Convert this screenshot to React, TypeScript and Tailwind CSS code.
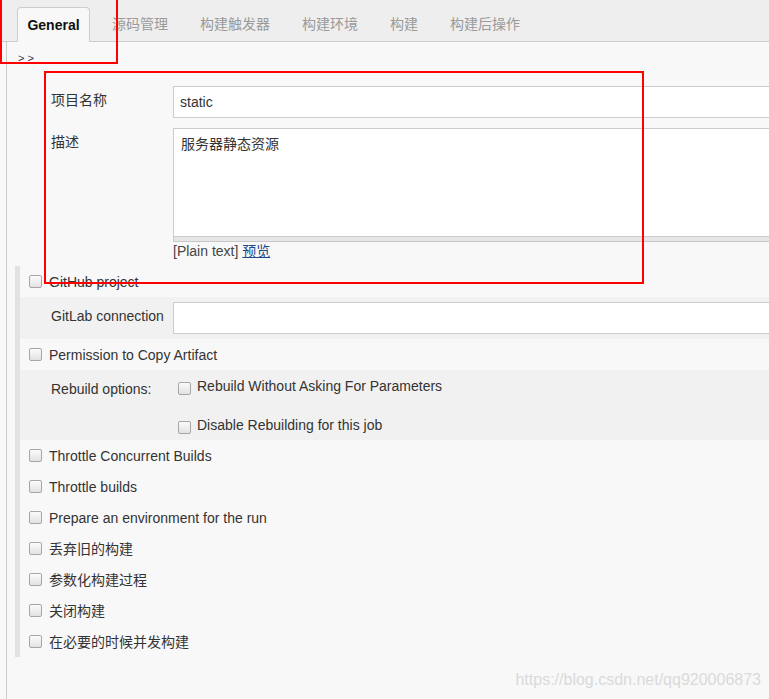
import React from "react";

const tabs = ["源码管理", "构建触发器", "构建环境", "构建", "构建后操作"];

const options = [
  "Throttle Concurrent Builds",
  "Throttle builds",
  "Prepare an environment for the run",
  "丢弃旧的构建",
  "参数化构建过程",
  "关闭构建",
  "在必要的时候并发构建",
];

const Box = () => (
  <span className="block w-[13px] h-[13px] shrink-0 rounded-[2px] border border-[#a6a6a6] bg-gradient-to-b from-[#fbfbfb] to-[#e2e2e2]" />
);

const CheckRow = ({ text }: { text: string }) => (
  <div className="flex h-[31px] items-center gap-[7px] pl-[9px]">
    <Box />
    <span className="leading-[16px]">{text}</span>
  </div>
);

const App = () => {
  return (
    <div className="relative w-[769px] h-[699px] overflow-hidden bg-[#f8f8f8] text-[14px] text-[#333] font-['Liberation_Sans','Noto_Sans_CJK_SC',sans-serif]">
      {/* tab bar */}
      <div className="flex h-[42px] items-end border-b border-[#cccccc] bg-[#eeeeee] pl-[17px]">
        <div className="-mb-px flex h-[35px] w-[73px] items-center justify-center rounded-t-[4px] border border-b-0 border-[#cccccc] bg-[#f8f8f8] font-bold text-[#111]">
          General
        </div>
        <div className="ml-[6px] flex h-full">
          {tabs.map((t) => (
            <div key={t} className="flex h-full items-center px-4 pt-[7px] text-[#9a9a9a]">
              {t}
            </div>
          ))}
        </div>
      </div>

      {/* body */}
      <div className="ml-[6px] h-[657px] border-l border-[#cccccc] pt-[8px]">
        <div className="h-[16px] pl-[11px] text-[11px] leading-[16px] text-[#335]">&gt; &gt;</div>

        <div className="mt-[20px] flex">
          <div className="w-[166px] shrink-0 pl-[44px] pt-[6px] leading-[16px]">项目名称</div>
          <div className="h-[32px] w-[620px] shrink-0 border border-[#cccccc] bg-white pl-[6px] leading-[30px]">
            static
          </div>
        </div>

        <div className="mt-[10px] flex">
          <div className="w-[166px] shrink-0 pl-[44px] pt-[6px] leading-[16px]">描述</div>
          <div className="w-[620px] shrink-0">
            <div className="h-[109px] border border-[#cccccc] bg-white pl-[7px] pt-[7px] leading-[16px]">
              服务器静态资源
            </div>
            <div className="h-[5px] border-x border-b border-[#c8c8c8] bg-[#e6e6e6]" />
          </div>
        </div>

        <div className="ml-[166px] h-[18px] leading-[18px] text-[#444]">
          [Plain text]{" "}
          <span className="text-[#204a87] underline">预览</span>
        </div>

        {/* section */}
        <div className="ml-[8px] mt-[6px] flex flex-col border-l-[5px] border-[#e2e2e2]">
          <CheckRow text="GitHub project" />

          <div className="flex h-[42px] bg-[#f1f1f1]">
            <div className="w-[153px] shrink-0 pl-[31px] pt-[11px] leading-[16px]">GitLab connection</div>
            <div className="mt-[5px] h-[32px] w-[620px] shrink-0 border border-[#cccccc] bg-white" />
          </div>

          <CheckRow text="Permission to Copy Artifact" />

          <div className="flex h-[70px] bg-[#f1f1f1]">
            <div className="w-[153px] shrink-0 pl-[31px] pt-[11px] leading-[16px]">Rebuild options:</div>
            <div className="ml-[5px] flex flex-col gap-[22px] pt-[8px]">
              <div className="flex items-start gap-[6px]">
                <span className="mt-[4px]">
                  <Box />
                </span>
                <span className="leading-[16px]">Rebuild Without Asking For Parameters</span>
              </div>
              <div className="flex items-start gap-[6px]">
                <span className="mt-[4px]">
                  <Box />
                </span>
                <span className="leading-[16px]">Disable Rebuilding for this job</span>
              </div>
            </div>
          </div>

          {options.map((o) => (
            <CheckRow key={o} text={o} />
          ))}
        </div>
      </div>

      {/* annotations */}
      <div className="absolute left-0 top-[-2px] h-[66px] w-[118px] border-2 border-[#ff0000]" />
      <div className="absolute left-[44px] top-[71px] h-[213px] w-[600px] border-2 border-[#ff0000]" />

      <div className="absolute bottom-[11px] right-[8px] text-[16px] leading-[16px] text-[#dadada]">
        https://blog.csdn.net/qq920006873
      </div>
    </div>
  );
};

export default App;
